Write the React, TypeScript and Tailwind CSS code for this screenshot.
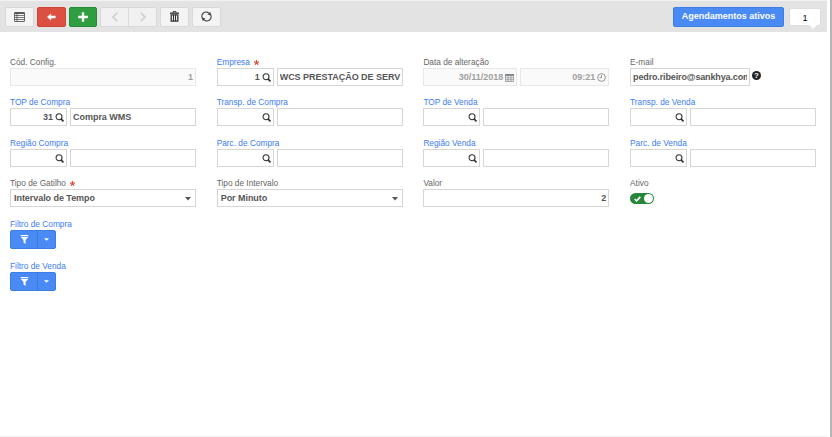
import { ReactNode } from "react";

const box =
  "flex h-[18px] items-center overflow-hidden whitespace-nowrap border border-[#d6d6d6] bg-white pt-px text-[9px] font-bold text-[#555]";
const disabledBox =
  "flex h-[18px] items-center justify-end border border-[#e8e8e8] bg-[#fafafa] pt-px text-[9px] font-bold text-[#a0a0a0]";
const toolButton =
  "flex h-[20px] w-[29px] items-center justify-center rounded-[2px] border border-[#d8d8d8] bg-[#f4f4f4] text-[#333]";

interface FieldProps {
  label: string;
  link?: boolean;
  required?: boolean;
  children: ReactNode;
}

function Field({ label, link, required, children }: FieldProps) {
  return (
    <div className="min-w-0">
      <div
        className={`flex h-[11px] items-center whitespace-nowrap text-[8.3px] leading-[11px] ${
          link ? "text-[#3b7df2]" : "text-[#666]"
        }`}
      >
        {label}
        {required && (
          <svg viewBox="0 0 10 10" className="ml-[4px] h-[5px] w-[5px]" stroke="#dd4b39" strokeWidth="2.4">
            <path d="M5 5V0M5 5L0 3.6M5 5L10 3.6M5 5L2 9.5M5 5L8 9.5" />
          </svg>
        )}
      </div>
      {children}
    </div>
  );
}

function SearchIcon() {
  return (
    <svg viewBox="0 0 10 10" className="h-[9px] w-[9px] shrink-0" fill="none" stroke="#333">
      <circle cx="4.5" cy="4.2" r="3.3" strokeWidth="1.2" />
      <path d="M6.7 6.5L9.4 9.4" strokeWidth="1.8" />
    </svg>
  );
}

function Lookup({ code, name }: { code?: string; name?: string }) {
  return (
    <div className="flex gap-[3px]">
      <div className={`${box} w-[57px] shrink-0 justify-end gap-[2px] pr-[2px]`}>
        {code && <span>{code}</span>}
        <SearchIcon />
      </div>
      <div className={`${box} min-w-0 flex-1 pl-[2px] pr-px`}>
        <span className="w-full overflow-hidden tracking-[-0.03px]">{name}</span>
      </div>
    </div>
  );
}

function Select({ value }: { value: string }) {
  return (
    <div className={`${box} justify-between pl-[3px] pr-[4px]`}>
      <span className="tracking-[-0.05px]">{value}</span>
      <svg viewBox="0 0 6 4" className="mt-px h-[4px] w-[6px]" fill="#555">
        <path d="M0 0H6L3 3.5Z" />
      </svg>
    </div>
  );
}

function FilterButton() {
  return (
    <div className="flex h-[19px] w-[46px] rounded-[2px] border border-[#3d7de6] bg-[#4a8af4]">
      <div className="flex flex-1 items-center justify-center border-r border-[#3c7ae0]">
        <svg viewBox="0 0 10 10" className="h-[9px] w-[9px]" fill="white">
          <path d="M.8 0H9.2V1.4H.8ZM.8 2.2H9.2L6.2 5.6V10L3.9 8.2V5.6Z" />
        </svg>
      </div>
      <div className="flex w-[17px] items-center justify-center">
        <svg viewBox="0 0 6 3" className="h-[3px] w-[5px]" fill="white">
          <path d="M0 0H6L3 3Z" />
        </svg>
      </div>
    </div>
  );
}

function Toolbar() {
  return (
    <div className="flex h-[32px] w-[827px] items-center border-t border-[#f2f2f2] bg-[#e3e3e3] pl-[5px] pr-[6px]">
      <div className={toolButton}>
        <svg viewBox="0 0 11 10" className="h-[10px] w-[11px]" fill="none" stroke="#444">
          <rect x=".5" y=".5" width="10" height="9" rx=".5" strokeWidth=".8" />
          <path d="M.5 1.3H10.5" strokeWidth="1.2" />
          <path d="M.5 3.5H10.5M.5 5.5H10.5M.5 7.5H10.5M3 1V9.5" strokeWidth=".7" />
        </svg>
      </div>
      <div className="ml-[3px] flex h-[20px] w-[29px] items-center justify-center rounded-[2px] border border-[#cf4434] bg-[#dc5041]">
        <svg viewBox="0 0 10 8" className="h-[8px] w-[9px]" fill="white">
          <path d="M0 4L4.6 0V2.6H9.5V5.4H4.6V8Z" />
        </svg>
      </div>
      <div className="ml-[3px] flex h-[20px] w-[28px] items-center justify-center rounded-[2px] border border-[#258b36] bg-[#2f9e41]">
        <svg viewBox="0 0 10 10" className="h-[10px] w-[10px]" stroke="white" strokeWidth="2.4">
          <path d="M5 .2V9.8M.2 5H9.8" />
        </svg>
      </div>
      <div className="ml-[3px] flex h-[20px] w-[57px] rounded-[2px] border border-[#d8d8d8] bg-[#f1f1f1]">
        <div className="flex flex-1 items-center justify-center border-r border-[#dadada]">
          <svg viewBox="0 0 6 10" className="h-[10px] w-[6px]" fill="none" stroke="#cfcfcf" strokeWidth="1.6">
            <path d="M5.3 .7L1 5L5.3 9.3" />
          </svg>
        </div>
        <div className="flex flex-1 items-center justify-center">
          <svg viewBox="0 0 6 10" className="h-[10px] w-[6px]" fill="none" stroke="#cfcfcf" strokeWidth="1.6">
            <path d="M.7 .7L5 5L.7 9.3" />
          </svg>
        </div>
      </div>
      <div className={`${toolButton} ml-[3px]`}>
        <svg viewBox="0 0 9 11" className="h-[11px] w-[9px]" fill="none" stroke="#333">
          <path d="M0 2.2H9" strokeWidth="1.3" />
          <path d="M3 2V.6H6V2" strokeWidth=".9" />
          <path d="M1.2 3.8H7.8V10.2H1.2Z" strokeWidth="1.3" />
          <path d="M3.5 4V10M5.5 4V10" strokeWidth="1.1" />
        </svg>
      </div>
      <div className={`${toolButton} ml-[3px]`}>
        <svg viewBox="0 0 12 12" className="h-[11px] w-[11px]" fill="none" stroke="#333" strokeWidth="1.3">
          <path d="M2.5 9A4.5 4.5 0 0 1 8.6 2.3M9.5 3A4.5 4.5 0 0 1 3.4 9.7" />
          <path d="M10.3 .8V4.1H7ZM1.7 11.2V7.9H5Z" fill="#333" stroke="none" />
        </svg>
      </div>
      <div className="ml-auto flex h-[20px] w-[111px] items-center justify-center whitespace-nowrap rounded-[2px] border border-[#3d7de6] bg-[#4a8af4] text-[9px] font-bold text-white">
        Agendamentos ativos
      </div>
      <div className="relative ml-[5px] mt-px flex h-[18px] w-[32px] items-center justify-center rounded-[2px] border border-[#ddd] bg-white pt-[3px] text-[9px] text-black">
        1
        <svg viewBox="0 0 8 4" className="absolute -bottom-[4px] right-[3px] h-[4px] w-[8px]" fill="white">
          <path d="M0 0H8L4 4Z" />
        </svg>
      </div>
    </div>
  );
}

export default function App() {
  return (
    <div className="flex h-[437px] w-[832px] justify-between overflow-hidden bg-white font-['Liberation_Sans',Arial,sans-serif]">
      <div className="w-[827px] border-b border-[#f0f0f0]">
        <Toolbar />
        <div className="grid auto-rows-[40.4px] grid-cols-[repeat(4,186px)] gap-x-[20.7px] pl-[10px] pt-[25px]">
          <Field label="Cód. Config.">
            <div className={`${disabledBox} pr-[2px]`}>1</div>
          </Field>
          <Field label="Empresa" link required>
            <Lookup code="1" name="WCS PRESTAÇÃO DE SERV" />
          </Field>
          <Field label="Data de alteração">
            <div className="flex gap-[3px]">
              <div className={`${disabledBox} w-[94px] gap-[2px] pr-[2px]`}>
                <span>30/11/2018</span>
                <svg viewBox="0 0 9 9" className="h-[9px] w-[9px]" fill="none" stroke="#888">
                  <path d="M0 2H9" strokeWidth="2" />
                  <path d="M.4 1V8.6H8.6V1M0 4.7H9M0 6.7H9M3 2V9M6 2V9" strokeWidth=".7" />
                </svg>
              </div>
              <div className={`${disabledBox} flex-1 gap-[2px] pr-[2px]`}>
                <span>09:21</span>
                <svg viewBox="0 0 10 10" className="h-[9px] w-[9px]" fill="none" stroke="#888">
                  <circle cx="5" cy="5" r="4.3" />
                  <path d="M5 2.3V5.3H2.8" />
                </svg>
              </div>
            </div>
          </Field>
          <Field label="E-mail">
            <div className="flex gap-[2px]">
              <div className={`${box} w-[120px] px-[2px]`}>
                <span className="w-full overflow-hidden tracking-[-0.14px]">pedro.ribeiro@sankhya.com</span>
              </div>
              <div className="mt-[3px] flex h-[9px] w-[9px] items-center justify-center rounded-full bg-[#222] text-[8px] font-bold leading-[9px] text-white">
                ?
              </div>
            </div>
          </Field>

          <Field label="TOP de Compra" link>
            <Lookup code="31" name="Compra WMS" />
          </Field>
          <Field label="Transp. de Compra" link>
            <Lookup />
          </Field>
          <Field label="TOP de Venda" link>
            <Lookup />
          </Field>
          <Field label="Transp. de Venda" link>
            <Lookup />
          </Field>

          <Field label="Região Compra" link>
            <Lookup />
          </Field>
          <Field label="Parc. de Compra" link>
            <Lookup />
          </Field>
          <Field label="Região Venda" link>
            <Lookup />
          </Field>
          <Field label="Parc. de Venda" link>
            <Lookup />
          </Field>

          <Field label="Tipo de Gatilho" required>
            <Select value="Intervalo de Tempo" />
          </Field>
          <Field label="Tipo de Intervalo">
            <Select value="Por Minuto" />
          </Field>
          <Field label="Valor">
            <div className={`${box} justify-end pr-[2px]`}>2</div>
          </Field>
          <Field label="Ativo">
            <div className="mt-[4px] flex h-[11px] w-[24px] items-center justify-between rounded-full bg-[#26873a] pl-[4px] pr-px">
              <svg viewBox="0 0 8 7" className="h-[6px] w-[7px]" fill="none" stroke="white" strokeWidth="1.8">
                <path d="M.7 3.5L3 5.7L7.3 1" />
              </svg>
              <div className="h-[9px] w-[9px] rounded-full bg-white" />
            </div>
          </Field>
        </div>
        <div className="flex flex-col gap-[12px] pl-[10px]">
          <Field label="Filtro de Compra" link>
            <FilterButton />
          </Field>
          <Field label="Filtro de Venda" link>
            <FilterButton />
          </Field>
        </div>
      </div>
      <div className="w-[2px] bg-[#b5b5b5]" />
    </div>
  );
}
